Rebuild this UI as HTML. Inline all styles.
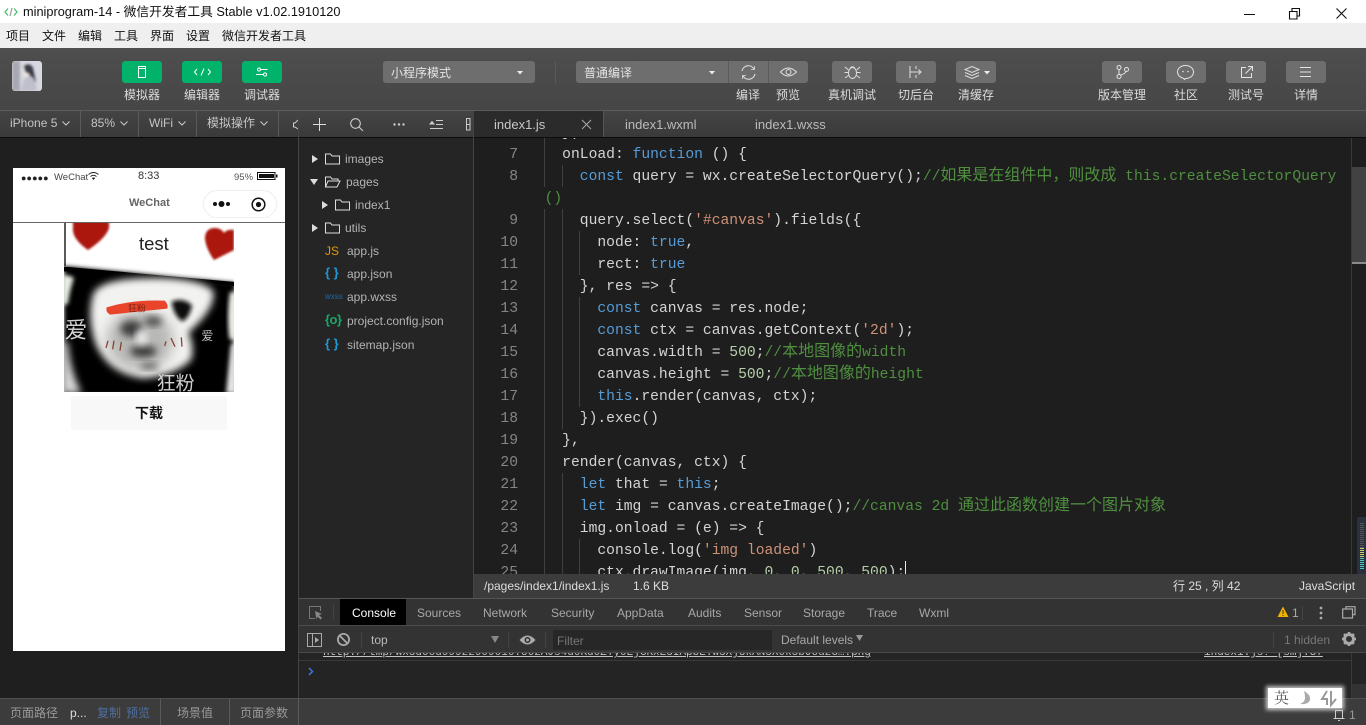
<!DOCTYPE html>
<html lang="zh"><head><meta charset="utf-8"><title>miniprogram-14</title>
<style>
html,body{margin:0;padding:0;width:1366px;height:725px;overflow:hidden;background:#1f1f1f}
body{position:relative;font:12px/16px "Liberation Sans","Noto Sans CJK SC",sans-serif;color:#ccc}
.a{position:absolute;white-space:nowrap}
.b{position:absolute;height:22px;top:61px;border-radius:3px;background:#6e6e6e}
.g{background:#00b26a;width:40px}
.w{width:40px}
.l{position:absolute;top:87px;transform:translateX(-50%);color:#dcdcdc;white-space:nowrap}
.m{position:absolute;top:28px;color:#111}
.r{position:absolute;top:115px;color:#c4c4c4;white-space:nowrap}
.v{position:absolute;width:1px;background:#5a5a5a}
.f{position:absolute;color:#b4b4b4;white-space:nowrap}
.t{position:absolute;top:605px;color:#a8a8a8;white-space:nowrap}
svg{position:absolute;overflow:visible}
#code{position:absolute;left:474px;top:138px;width:877px;height:436px;overflow:hidden;background:#1e1e1e}
.n{position:absolute;left:0;width:44px;height:22px;margin-top:1px;text-align:right;font:14.67px/22px "Liberation Mono",monospace;color:#858585}
.c{position:absolute;left:70.6px;height:22px;margin-top:1px;font:14.67px/22px "Liberation Mono",monospace;color:#d4d4d4;white-space:pre}
.c i{font-style:normal;color:#569cd6}.c s{text-decoration:none;color:#ce9178}.c u{text-decoration:none;color:#b5cea8}.c em{font-style:normal;color:#4f8f3f}
.c b{font:400 16px/0 "Noto Sans CJK SC",sans-serif}
.gl{position:absolute;width:1px;background:#404040}
</style></head><body>

<!-- title bar -->
<div class="a" style="left:0;top:0;width:1366px;height:23px;background:#fff"></div>
<svg style="left:4px;top:6px" width="14" height="12" viewBox="0 0 14 12" fill="none" stroke="#3cc060" stroke-width="1.2"><path d="M4 2.500 1 6l3 3.500M10 2.500 13 6l-3 3.500"/><path d="M8 2 6 10" stroke="#999"/></svg>
<div class="a" style="left:23px;top:4px;font-size:12.750px;color:#111">miniprogram-14 - 微信开发者工具 Stable v1.02.1910120</div>
<svg style="left:1244px;top:8px" width="12" height="12" fill="none" stroke="#111"><path d="M0 6.500h11"/></svg>
<svg style="left:1289px;top:8px" width="12" height="12" fill="none" stroke="#111" stroke-width="1.100"><path d="M.5 3.500h7.500v7.500H.5zM3 3.500V.5h7.500V8H8"/></svg>
<svg style="left:1336px;top:8px" width="12" height="12" fill="none" stroke="#111" stroke-width="1.100"><path d="M.5.5l10 10M10.500.5l-10 10"/></svg>

<!-- menu -->
<div class="a" style="left:0;top:23px;width:1366px;height:25px;background:#efefef"></div>
<span class="m" style="left:6px">项目</span><span class="m" style="left:42px">文件</span><span class="m" style="left:78px">编辑</span><span class="m" style="left:114px">工具</span><span class="m" style="left:150px">界面</span><span class="m" style="left:186px">设置</span><span class="m" style="left:222px">微信开发者工具</span>

<!-- toolbar -->
<div class="a" style="left:0;top:48px;width:1366px;height:62px;background:linear-gradient(#4e4e4e,#464646)"></div>
<div class="a" style="left:0;top:110px;width:1366px;height:1px;background:#5c5c5c"></div>
<div class="a" style="left:0;top:111px;width:1366px;height:26px;background:linear-gradient(#444,#3a3a3a)"></div>
<div class="a" style="left:0;top:137px;width:1366px;height:1px;background:#0c0c0c"></div>

<svg style="left:12px;top:61px;border-radius:3px;overflow:hidden" width="30" height="30" viewBox="0 0 30 30"><defs><filter id="bl"><feGaussianBlur stdDeviation="1.200"/></filter></defs><rect width="30" height="30" fill="#d8d8e0"/><g filter="url(#bl)"><rect x="0" y="0" width="8" height="30" fill="#a8a8b4"/><ellipse cx="16" cy="11" rx="5" ry="6" fill="#f0e8e4"/><path d="M12 5q6-4 9 2l3 14-5 2-2-10-4-2z" fill="#3a3a44"/><path d="M9 30q2-15 8-15t8 15z" fill="#c0c0cc"/></g></svg>

<div class="b g" style="left:122px"></div><div class="b g" style="left:182px"></div><div class="b g" style="left:242px"></div>
<svg style="left:138px;top:66px" width="9" height="12" fill="none" stroke="#fff" stroke-width="1"><rect x=".5" y=".5" width="7" height="11"/><path d="M.5 2.500h7"/></svg>
<svg style="left:194px;top:68px" width="17" height="8" fill="none" stroke="#fff" stroke-width="1"><path d="M3 1 .5 4 3 7M14 1l2.500 3L14 7M10 .5l-3 7"/></svg>
<svg style="left:256px;top:67px" width="12" height="10" fill="none" stroke="#fff" stroke-width="1"><circle cx="3" cy="2.500" r="1.500"/><path d="M4.500 2.500h7M0 7.500h7"/><circle cx="9" cy="7.500" r="1.600"/></svg>
<span class="l" style="left:142px">模拟器</span><span class="l" style="left:202px">编辑器</span><span class="l" style="left:262px">调试器</span>

<div class="b" style="left:383px;width:152px"></div>
<span class="a" style="left:391px;top:65px;color:#e4e4e4">小程序模式</span>
<svg style="left:517px;top:71px" width="6" height="4"><path d="M0 0h6L3 3.500z" fill="#eee"/></svg>
<div class="v" style="left:555px;top:61px;height:22px;background:#5a5a5a"></div>

<div class="b" style="left:576px;width:232px"></div>
<div class="v" style="left:728px;top:61px;height:22px;background:#5c5c5c"></div><div class="v" style="left:768px;top:61px;height:22px;background:#5c5c5c"></div>
<span class="a" style="left:584px;top:65px;color:#e4e4e4">普通编译</span>
<svg style="left:709px;top:71px" width="6" height="4"><path d="M0 0h6L3 3.500z" fill="#eee"/></svg>
<svg style="left:741px;top:65px" width="15" height="15" fill="none" stroke="#e0e0e0" stroke-width="1.100"><path d="M1 6A6.500 6.500 0 0 1 13 4M14 9A6.500 6.500 0 0 1 2 11"/><path d="M13.500 1v3.500H10M1.500 14v-3.500H5" stroke-width=".8"/></svg>
<svg style="left:780px;top:66px" width="17" height="12" fill="none" stroke="#e0e0e0" stroke-width="1"><path d="M.5 6Q8-2 16.500 6 8 14 .5 6z"/><circle cx="8.500" cy="6" r="2.500"/></svg>
<span class="l" style="left:748px">编译</span><span class="l" style="left:788px">预览</span>

<div class="b w" style="left:832px"></div>
<svg style="left:844px;top:64px" width="17" height="16" fill="none" stroke="#ddd" stroke-width="1"><ellipse cx="8.500" cy="9" rx="4" ry="5.500"/><path d="M6 4.500Q8.500 1 11 4.500M1 3l3.500 3M16 3l-3.500 3M1 14l3.500-2.500M16 14l-3.500-2.500M.5 8.500h4M12.500 8.500h4"/></svg>
<span class="l" style="left:852px">真机调试</span>
<div class="b w" style="left:896px"></div>
<svg style="left:909px;top:66px" width="15" height="12" fill="none" stroke="#ddd" stroke-width="1"><path d="M1 0v12M7 0v3M7 9v3M1 6h11M9.500 3.500 12 6 9.500 8.500"/></svg>
<span class="l" style="left:916px">切后台</span>
<div class="b w" style="left:956px"></div>
<svg style="left:964px;top:66px" width="16" height="13" fill="none" stroke="#ddd" stroke-width="1"><path d="M8 .5l7 3-7 3-7-3zM1 6.500l7 3 7-3M1 9.500l7 3 7-3"/></svg>
<svg style="left:984px;top:71px" width="6" height="4"><path d="M0 0h6L3 3.500z" fill="#eee"/></svg>
<span class="l" style="left:976px">清缓存</span>

<div class="b w" style="left:1102px"></div>
<svg style="left:1116px;top:65px" width="13" height="14" fill="none" stroke="#e4e4e4" stroke-width="1"><circle cx="3" cy="2.500" r="2"/><circle cx="3" cy="11.500" r="2"/><circle cx="10.500" cy="4.500" r="2"/><path d="M3 4.500v5M10 6.500Q9 9 4.500 10"/></svg>
<span class="l" style="left:1122px">版本管理</span>
<div class="b w" style="left:1166px"></div>
<svg style="left:1177px;top:65px" width="17" height="15" fill="none" stroke="#e4e4e4" stroke-width="1"><path d="M8.500 .5c4.500 0 8 2.800 8 6.500s-3.500 6.500-8 6.500l-1 1-1-1.200C3 12.500.5 10 .5 7 .5 3.300 4 .5 8.500.5z"/><circle cx="6" cy="6.500" r=".8" fill="#e4e4e4" stroke="none"/><circle cx="11" cy="6.500" r=".8" fill="#e4e4e4" stroke="none"/></svg>
<span class="l" style="left:1186px">社区</span>
<div class="b w" style="left:1226px"></div>
<svg style="left:1241px;top:66px" width="12" height="12" fill="none" stroke="#e4e4e4" stroke-width="1"><path d="M5 1.500H.5v10h10V7M4.500 7.500 11 1M7 .5h4.500V5"/></svg>
<span class="l" style="left:1246px">测试号</span>
<div class="b w" style="left:1286px"></div>
<svg style="left:1300px;top:67px" width="11" height="10" stroke="#e4e4e4"><path d="M0 .5h11M0 5h11M0 9.500h11"/></svg>
<span class="l" style="left:1306px">详情</span>

<!-- second row -->
<span class="r" style="left:10px">iPhone 5</span><span class="r" style="left:91px">85%</span><span class="r" style="left:149px">WiFi</span><span class="r" style="left:207px">模拟操作</span>
<svg style="left:62px;top:121px" width="8" height="5" fill="none" stroke="#ccc"><path d="M.5.5 4 4 7.500.5"/></svg>
<svg style="left:120px;top:121px" width="8" height="5" fill="none" stroke="#ccc"><path d="M.5.5 4 4 7.500.5"/></svg>
<svg style="left:178px;top:121px" width="8" height="5" fill="none" stroke="#ccc"><path d="M.5.5 4 4 7.500.5"/></svg>
<svg style="left:260px;top:121px" width="8" height="5" fill="none" stroke="#ccc"><path d="M.5.5 4 4 7.500.5"/></svg>
<div class="v" style="left:80px;top:111px;height:26px"></div><div class="v" style="left:138px;top:111px;height:26px"></div><div class="v" style="left:196px;top:111px;height:26px"></div><div class="v" style="left:278px;top:111px;height:26px"></div>
<svg style="left:293px;top:119px" width="5" height="11" fill="none" stroke="#ccc"><path d="M5 1 2 4H.5v4H2l3 2"/></svg>
<svg style="left:313px;top:118px" width="13" height="13" stroke="#ddd" stroke-width="1"><path d="M6.500 0v13M0 6.500h13"/></svg>
<svg style="left:350px;top:118px" width="13" height="13" fill="none" stroke="#ccc" stroke-width="1.100"><circle cx="5.500" cy="5.500" r="4.800"/><path d="M9 9l4 4"/></svg>
<svg style="left:393px;top:123px" width="12" height="3"><circle cx="1.500" cy="1.500" r="1.200" fill="#ccc"/><circle cx="6" cy="1.500" r="1.200" fill="#ccc"/><circle cx="10.500" cy="1.500" r="1.200" fill="#ccc"/></svg>
<svg style="left:430px;top:119px" width="13" height="11"><path d="M0 5h4L2 2.500zM6 1.500h7M6 5.500h7M0 9.500h13" stroke="#ccc" fill="#ccc" stroke-width="1"/></svg>
<svg style="left:466px;top:118px" width="5" height="13" fill="none" stroke="#ccc"><rect x=".5" y=".5" width="3.500" height="11.500"/><path d="M.5 6.500h3.500"/></svg>

<div class="v" style="left:298px;top:111px;height:587px;background:#444"></div>
<div class="a" style="left:473px;top:111px;width:1px;height:487px;background:#444"></div>
<div class="a" style="left:474px;top:111px;width:129px;height:26px;background:#2b2b2b"></div>
<div class="a" style="left:603px;top:111px;width:1px;height:26px;background:#555"></div>
<span class="a" style="left:494px;top:117px;font-size:13px;color:#c8c8c8">index1.js</span>
<svg style="left:582px;top:120px" width="9" height="9" stroke="#aaa"><path d="M0 0l9 9M9 0 0 9"/></svg>
<span class="a" style="left:625px;top:117px;font-size:13px;color:#bbb">index1.wxml</span>
<span class="a" style="left:755px;top:117px;font-size:13px;color:#bbb">index1.wxss</span>

<!-- simulator -->
<div class="a" style="left:0;top:138px;width:298px;height:560px;background:#1f1f1f"></div>
<div class="a" style="left:13px;top:168px;width:272px;height:483px;background:#fff"></div>
<span class="a" style="left:21px;top:170px;font-size:9px;letter-spacing:.1px;color:#222">●●●●●</span>
<span class="a" style="left:54px;top:170px;font-size:9.500px;color:#444">WeChat</span>
<svg style="left:88px;top:172px" width="11" height="8" fill="none" stroke="#222"><path d="M.5 2.500Q5.500-1.500 10.500 2.500M2.500 4.500Q5.500 2 8.500 4.500"/><path d="M5.500 8 3.800 6Q5.500 5 7.200 6z" fill="#222" stroke="none"/></svg>
<span class="a" style="left:138px;top:168px;font-size:11px;color:#333">8:33</span>
<span class="a" style="left:234px;top:170px;font-size:9.500px;color:#555">95%</span>
<svg style="left:257px;top:172px" width="21" height="9"><rect x=".5" y=".5" width="17.500" height="7" fill="none" stroke="#111"/><rect x="2" y="2" width="15" height="4" fill="#111"/><rect x="19" y="2.500" width="1.500" height="3" fill="#111"/></svg>
<span class="a" style="left:129px;top:195px;font-size:11px;font-weight:bold;color:#666">WeChat</span>
<div class="a" style="left:203px;top:190px;width:72px;height:26px;border:1px solid #eee;border-radius:14px;box-sizing:content-box"></div>
<svg style="left:212px;top:200px" width="19" height="8"><circle cx="3" cy="4" r="2" fill="#111"/><circle cx="9.500" cy="4" r="3" fill="#111"/><circle cx="16" cy="4" r="2" fill="#111"/></svg>
<svg style="left:251px;top:197px" width="15" height="15"><circle cx="7.500" cy="7.500" r="6.300" fill="none" stroke="#111" stroke-width="1.500"/><circle cx="7.500" cy="7.500" r="2.600" fill="#111"/></svg>
<div class="a" style="left:13px;top:222px;width:272px;height:1px;background:#666"></div>

<svg style="left:64px;top:223px;overflow:hidden" width="170" height="169" viewBox="0 0 170 169">
<defs><filter id="s"><feGaussianBlur stdDeviation="1"/></filter><filter id="sa" x="-30%" y="-30%" width="160%" height="160%"><feGaussianBlur stdDeviation="6"/></filter><filter id="sb" x="-30%" y="-30%" width="160%" height="160%"><feGaussianBlur stdDeviation="11"/></filter><filter id="sc" x="-40%" y="-40%" width="180%" height="180%"><feGaussianBlur stdDeviation="20"/></filter></defs>
<rect width="170" height="169" fill="#fff"/>
<path d="M9-6H45V5Q42 15 24 27 8 16 9 5z" fill="#ab1408" filter="url(#s)"/>
<path d="M141 14q1-9 10-9 6 0 9 5 3-4 10-3v20L150 37Q141 24 141 14z" fill="#ab1408" filter="url(#s)"/>
<path d="M1 0v43" stroke="#222" stroke-width="1.500"/>
<text x="75" y="27" font-family="Liberation Sans" font-size="18.500" fill="#222">test</text>
<g transform="translate(-4 39) scale(.3333)">
<path d="M12 12 525 62V400H12z" fill="#060606" filter="url(#sa)"/>
<path d="M12 14 525 60v12L12 28z" fill="#000"/>
<path d="M6 38Q30 40 42 48 30 80 24 125L6 130z" fill="#e8efe4" filter="url(#sa)"/>
<path d="M6 240H24Q28 320 65 395H6z" fill="#d8d8d8" filter="url(#sb)"/>
<path d="M530 90H510Q500 160 508 230L530 240z" fill="#f0f4ea" filter="url(#sa)"/>
<path d="M530 230 512 250 498 395H530z" fill="#e4e4e4" filter="url(#sa)"/>
<path d="M100 95Q125 45 300 48 430 52 460 88 468 140 385 212 404 250 394 292 350 340 250 348 140 330 105 240 80 160 100 95z" fill="#f2f2f0" filter="url(#sb)"/>
<path d="M335 118Q372 106 396 130 388 170 366 178 340 160 335 118z" fill="#0a0a0a" filter="url(#sa)"/>
<ellipse cx="240" cy="235" rx="100" ry="92" fill="#b8b8b6" filter="url(#sc)"/>
<ellipse cx="215" cy="200" rx="34" ry="24" fill="#3c3c3c" filter="url(#sb)"/>
<ellipse cx="280" cy="178" rx="26" ry="15" fill="#505050" filter="url(#sb)"/>
<ellipse cx="250" cy="268" rx="40" ry="18" fill="#3c3c3c" filter="url(#sb)"/>
<ellipse cx="268" cy="312" rx="28" ry="11" fill="#666" filter="url(#sb)"/>
<ellipse cx="245" cy="225" rx="16" ry="24" fill="#eee" filter="url(#sb)"/>
<path d="M140 136Q220 112 314 116 326 128 322 140 240 148 150 158 136 150 140 136z" fill="#e8452a"/>
<text x="204" y="148" font-family="Noto Sans CJK SC" font-size="27" fill="#7a2416">狂粉</text>
<path d="M144 236l-6 22M162 236l-4 26M184 240l-4 26M318 238l-4 14M333 228l12 26M364 226l2 28" stroke="#8a4436" stroke-width="4"/>
<text x="14" y="228" font-family="Noto Sans CJK SC" font-size="68" fill="#d0d0d0">爱</text>
<text x="424" y="234" font-family="Noto Sans CJK SC" font-size="36" fill="#bcbcbc">爱</text>
<text x="290" y="382" font-family="Noto Sans CJK SC" font-size="57" fill="#d0d0d0">狂粉</text>
</g>
</svg>
<div class="a" style="left:71px;top:396px;width:156px;height:34px;background:#f8f8f8;border-radius:2px;text-align:center;font-size:14px;line-height:34px;font-weight:bold;color:#111">下载</div>

<!-- file tree -->
<div class="a" style="left:299px;top:138px;width:174px;height:461px;background:#252525"></div>
<svg style="left:312px;top:155px" width="6" height="8"><path d="M0 0l6 4-6 4z" fill="#ddd"/></svg>
<svg style="left:325px;top:153px" width="15" height="12" fill="none" stroke="#ddd"><path d="M.5 1h5l1.500 2h7.500v8H.5z"/></svg>
<span class="f" style="left:345px;top:151px">images</span>
<svg style="left:310px;top:179px" width="8" height="6"><path d="M0 0h8L4 6z" fill="#ddd"/></svg>
<svg style="left:325px;top:176px" width="16" height="12" fill="none" stroke="#ddd"><path d="M.5 11V1h5l1.500 2h6v2M.5 11h11.500l3-6H3z"/></svg>
<span class="f" style="left:346px;top:174px">pages</span>
<svg style="left:322px;top:201px" width="6" height="8"><path d="M0 0l6 4-6 4z" fill="#ddd"/></svg>
<svg style="left:335px;top:199px" width="15" height="12" fill="none" stroke="#ddd"><path d="M.5 1h5l1.500 2h7.500v8H.5z"/></svg>
<span class="f" style="left:355px;top:197px">index1</span>
<svg style="left:312px;top:224px" width="6" height="8"><path d="M0 0l6 4-6 4z" fill="#ddd"/></svg>
<svg style="left:325px;top:222px" width="15" height="12" fill="none" stroke="#ddd"><path d="M.5 1h5l1.500 2h7.500v8H.5z"/></svg>
<span class="f" style="left:345px;top:220px">utils</span>
<span class="a" style="left:325px;top:243px;font-size:12px;color:#e09a10">JS</span><span class="f" style="left:347px;top:243px">app.js</span>
<span class="a" style="left:325px;top:265px;font-size:13px;font-weight:bold;color:#1a9ad6">{ }</span><span class="f" style="left:347px;top:266px">app.json</span>
<span class="a" style="left:325px;top:289px;font-size:8px;color:#1a6ab0">wxss</span><span class="f" style="left:347px;top:289px">app.wxss</span>
<span class="a" style="left:325px;top:312px;font-size:13px;font-weight:bold;color:#18a86a;letter-spacing:-.5px">{o}</span><span class="f" style="left:347px;top:313px">project.config.json</span>
<span class="a" style="left:325px;top:336px;font-size:13px;font-weight:bold;color:#1a9ad6">{ }</span><span class="f" style="left:347px;top:337px">sitemap.json</span>

<!-- editor -->
<div id="code">
<div class="gl" style="left:70px;top:0;height:49px"></div><div class="gl" style="left:70px;top:71px;height:365px"></div>
<div class="gl" style="left:88px;top:27px;height:22px"></div><div class="gl" style="left:88px;top:71px;height:220px"></div><div class="gl" style="left:88px;top:335px;height:101px"></div>
<div class="gl" style="left:105px;top:93px;height:44px"></div><div class="gl" style="left:105px;top:159px;height:110px"></div><div class="gl" style="left:105px;top:401px;height:35px"></div>
<div class="c" style="top:-17px">  })</div>
<div class="n" style="top:5px">7</div><div class="c" style="top:5px">  onLoad: <i>function</i> () {</div>
<div class="n" style="top:27px">8</div><div class="c" style="top:27px">    <i>const</i> query = wx.createSelectorQuery();<em>//<b>如果是在组件中，则改成</b> this.createSelectorQuery</em></div>
<div class="c" style="top:49px"><em>()</em></div>
<div class="n" style="top:71px">9</div><div class="c" style="top:71px">    query.select(<s>'#canvas'</s>).fields({</div>
<div class="n" style="top:93px">10</div><div class="c" style="top:93px">      node: <i>true</i>,</div>
<div class="n" style="top:115px">11</div><div class="c" style="top:115px">      rect: <i>true</i></div>
<div class="n" style="top:137px">12</div><div class="c" style="top:137px">    }, res =&gt; {</div>
<div class="n" style="top:159px">13</div><div class="c" style="top:159px">      <i>const</i> canvas = res.node;</div>
<div class="n" style="top:181px">14</div><div class="c" style="top:181px">      <i>const</i> ctx = canvas.getContext(<s>'2d'</s>);</div>
<div class="n" style="top:203px">15</div><div class="c" style="top:203px">      canvas.width = <u>500</u>;<em>//<b>本地图像的</b>width</em></div>
<div class="n" style="top:225px">16</div><div class="c" style="top:225px">      canvas.height = <u>500</u>;<em>//<b>本地图像的</b>height</em></div>
<div class="n" style="top:247px">17</div><div class="c" style="top:247px">      <i>this</i>.render(canvas, ctx);</div>
<div class="n" style="top:269px">18</div><div class="c" style="top:269px">    }).exec()</div>
<div class="n" style="top:291px">19</div><div class="c" style="top:291px">  },</div>
<div class="n" style="top:313px">20</div><div class="c" style="top:313px">  render(canvas, ctx) {</div>
<div class="n" style="top:335px">21</div><div class="c" style="top:335px">    <i>let</i> that = <i>this</i>;</div>
<div class="n" style="top:357px">22</div><div class="c" style="top:357px">    <i>let</i> img = canvas.createImage();<em>//canvas 2d <b>通过此函数创建一个图片对象</b></em></div>
<div class="n" style="top:379px">23</div><div class="c" style="top:379px">    img.onload = (e) =&gt; {</div>
<div class="n" style="top:401px">24</div><div class="c" style="top:401px">      console.log(<s>'img loaded'</s>)</div>
<div class="n" style="top:423px">25</div><div class="c" style="top:423px">      ctx.drawImage(img, <u>0</u>, <u>0</u>, <u>500</u>, <u>500</u>);</div>
<div class="a" style="left:431px;top:423px;width:1px;height:13px;background:#e8e8e8"></div>
</div>
<!-- scrollbar -->
<div class="a" style="left:1351px;top:138px;width:15px;height:436px;background:#1e1e1e;border-left:1px solid #3a3a3a;box-sizing:border-box"></div>
<div class="a" style="left:1352px;top:167px;width:14px;height:96px;background:#424242"></div>
<div class="a" style="left:1352px;top:262px;width:14px;height:2px;background:#8a8a8a"></div>
<div class="a" style="left:1357px;top:517px;width:9px;height:57px;background:#2a3040;border-radius:2px 0 0 2px"></div>
<div class="a" style="left:1360px;top:523px;width:4px;height:32px;background:repeating-linear-gradient(#555 0 1px,#2a3040 1px 2px)"></div>
<div class="a" style="left:1360px;top:548px;width:4px;height:10px;background:repeating-linear-gradient(#c8d070 0 1px,#2a3040 1px 2px)"></div>
<div class="a" style="left:1360px;top:558px;width:4px;height:11px;background:repeating-linear-gradient(#4ec8c0 0 1px,#2a3040 1px 2px)"></div>

<!-- status bar -->
<div class="a" style="left:474px;top:574px;width:892px;height:24px;background:#3c3c3c"></div>
<span class="a" style="left:484px;top:578px;color:#ddd">/pages/index1/index1.js</span>
<span class="a" style="left:633px;top:578px;color:#ddd">1.6 KB</span>
<span class="a" style="left:1173px;top:578px;color:#ddd">行 25 , 列 42</span>
<span class="a" style="left:1299px;top:578px;color:#ddd">JavaScript</span>

<!-- devtools -->
<div class="a" style="left:299px;top:598px;width:1067px;height:1px;background:#555"></div>
<div class="a" style="left:299px;top:599px;width:1067px;height:54px;background:#333"></div>
<div class="a" style="left:299px;top:625px;width:1067px;height:1px;background:#4a4a4a"></div>
<div class="a" style="left:299px;top:652px;width:1067px;height:1px;background:#4a4a4a"></div>
<svg style="left:309px;top:606px" width="15" height="14" fill="none" stroke="#777"><path d="M11.500 5V.5H.5v12H6"/><path d="M6 5l7 3-3 1 3 3-1.500 1.500-3-3-1 3z" fill="#888" stroke="none"/></svg>
<div class="a" style="left:333px;top:604px;width:1px;height:16px;background:#444"></div>
<div class="a" style="left:340px;top:599px;width:66px;height:26px;background:#000"></div>
<span class="t" style="left:352px;color:#fff">Console</span><span class="t" style="left:417px">Sources</span><span class="t" style="left:483px">Network</span><span class="t" style="left:551px">Security</span><span class="t" style="left:617px">AppData</span><span class="t" style="left:688px">Audits</span><span class="t" style="left:744px">Sensor</span><span class="t" style="left:803px">Storage</span><span class="t" style="left:867px">Trace</span><span class="t" style="left:919px">Wxml</span>
<svg style="left:1277px;top:606px" width="12" height="12"><path d="M6 .5 11.500 11H.5z" fill="#f0b400"/><path d="M6 4v4M6 9v1" stroke="#333"/></svg>
<span class="a" style="left:1292px;top:605px;color:#aaa">1</span>
<div class="a" style="left:1302px;top:606px;width:1px;height:14px;background:#444"></div>
<svg style="left:1319px;top:606px" width="4" height="14"><circle cx="2" cy="2" r="1.400" fill="#aaa"/><circle cx="2" cy="7" r="1.400" fill="#aaa"/><circle cx="2" cy="12" r="1.400" fill="#aaa"/></svg>
<svg style="left:1342px;top:606px" width="14" height="13" fill="none" stroke="#aaa" stroke-width="1.200"><path d="M4 3V.7h9v8h-2.500"/><rect x=".7" y="3" width="9.800" height="9"/></svg>

<svg style="left:307px;top:633px" width="15" height="14" fill="none" stroke="#aaa"><rect x=".5" y=".5" width="14" height="13"/><path d="M5.500 .5v13" /><path d="M8 4l4 3-4 3z" fill="#aaa" stroke="none"/></svg>
<svg style="left:336px;top:632px" width="15" height="15" fill="none" stroke="#aaa" stroke-width="1.800"><circle cx="7.500" cy="7.500" r="5.600"/><path d="M3.500 3.500l8 8"/></svg>
<div class="a" style="left:361px;top:632px;width:1px;height:16px;background:#444"></div>
<span class="a" style="left:371px;top:632px;color:#bbb">top</span>
<svg style="left:491px;top:636px" width="8" height="7"><path d="M0 0h8L4 7z" fill="#888"/></svg>
<div class="a" style="left:508px;top:632px;width:1px;height:16px;background:#444"></div>
<svg style="left:519px;top:634px" width="17" height="12"><path d="M.5 6Q8.500-3 16.500 6 8.500 15 .5 6z" fill="#aaa"/><circle cx="8.500" cy="6" r="3" fill="#333"/><circle cx="8.500" cy="6" r="1.500" fill="#aaa"/></svg>
<div class="a" style="left:545px;top:632px;width:1px;height:16px;background:#444"></div>
<div class="a" style="left:553px;top:630px;width:219px;height:20px;background:#272727"></div>
<span class="a" style="left:557px;top:633px;color:#777">Filter</span>
<span class="a" style="left:781px;top:632px;color:#aaa">Default levels</span>
<svg style="left:856px;top:635px" width="7" height="6"><path d="M0 0h7L3.500 6z" fill="#999"/></svg>
<div class="a" style="left:1273px;top:632px;width:1px;height:16px;background:#444"></div>
<span class="a" style="left:1284px;top:632px;color:#777">1 hidden</span>
<svg style="left:1341px;top:631px" width="16" height="16" viewBox="0 0 16 16"><circle cx="8" cy="8" r="4.500" fill="none" stroke="#aaa" stroke-width="3"/><path d="M8 1v14M1 8h14M3 3l10 10M13 3 3 13" stroke="#aaa" stroke-width="2.500" stroke-dasharray="2.500 9 2.500"/></svg>

<div class="a" style="left:299px;top:653px;width:1067px;height:45px;background:#242424;overflow:hidden">
<div class="a" style="left:24px;top:-8px;font:11px/16px 'Liberation Mono',monospace;color:#c4c4c4;text-decoration:underline">http://tmp/wx5d0cd99922909010.o6zAJs4d0Kd0ZYy0EjGKxE5IApbE.W5XjUkAN5X0k5bJcu2G….png</div>
<div class="a" style="left:905px;top:-8px;font:11px/16px 'Liberation Mono',monospace;color:#c4c4c4;text-decoration:underline">index1.js? [sm]:37</div>
<div class="a" style="left:0;top:7px;width:1052px;height:1px;background:#3a3a3a"></div>
<div class="a" style="left:1052px;top:0;width:1px;height:45px;background:#3a3a3a"></div>
<div class="a" style="left:1053px;top:31px;width:14px;height:14px;background:#333"></div>
<svg style="left:9px;top:14px" width="6" height="9" fill="none" stroke="#3a78e0" stroke-width="1.500"><path d="M1 1l3.500 3.500L1 8"/></svg>
</div>

<!-- bottom -->
<div class="a" style="left:0;top:698px;width:1366px;height:27px;background:#3c3c3c;border-top:1px solid #4f4f4f;box-sizing:border-box"></div>
<span class="a" style="left:10px;top:705px;color:#9a9a9a">页面路径</span>
<span class="a" style="left:70px;top:705px;color:#ddd">p...</span>
<span class="a" style="left:97px;top:705px;color:#4f6f9f">复制</span><span class="a" style="left:126px;top:705px;color:#4f6f9f">预览</span>
<div class="v" style="left:160px;top:699px;height:26px"></div>
<span class="a" style="left:177px;top:705px;color:#9a9a9a">场景值</span>
<div class="v" style="left:229px;top:699px;height:26px"></div>
<span class="a" style="left:240px;top:705px;color:#9a9a9a">页面参数</span>
<div class="v" style="left:298px;top:699px;height:26px"></div>

<!-- IME -->
<div class="a" style="left:1268px;top:688px;width:74px;height:20px;background:#fff;box-shadow:0 0 4px 2px rgba(255,255,255,.75)"></div>
<span class="a" style="left:1274px;top:690px;font-size:15px;color:#555;font-family:'Noto Serif CJK SC',serif">英</span>
<svg style="left:1298px;top:690px" width="14" height="16"><path d="M6 1q7 4 6 9-2 5-10 4 5-2 5-6 0-4-1-7z" fill="#aaa"/></svg>
<svg style="left:1321px;top:690px" width="16" height="16" stroke="#999" stroke-width="2" fill="none"><path d="M6 1 1 9h5v6M10 1v14l5-6"/></svg>
<svg style="left:1333px;top:709px" width="12" height="12" fill="none" stroke="#ccc"><path d="M2.500 9V1.500h7V9M.5 9.500h11M5 11.500h2"/></svg>
<span class="a" style="left:1349px;top:707px;color:#999">1</span>
</body></html>
